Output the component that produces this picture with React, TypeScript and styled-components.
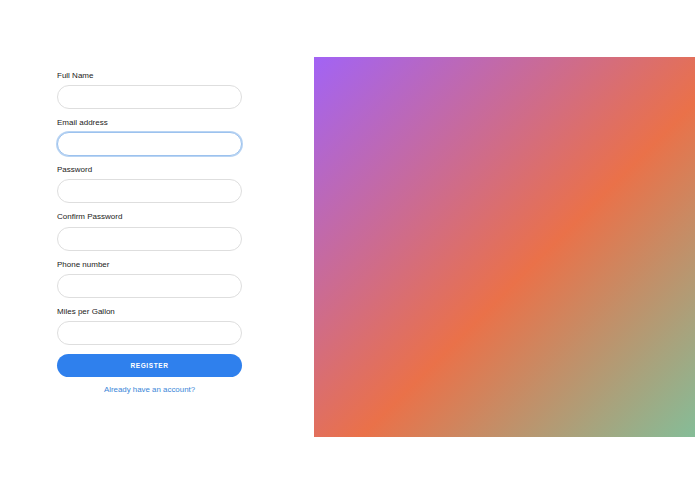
import React from "react";
import styled, { createGlobalStyle } from "styled-components";

const Global = createGlobalStyle`
  html, body { margin: 0; padding: 0; background: #ffffff; }
  body { font-family: "Liberation Sans", Arial, sans-serif; overflow: hidden; }
  * { box-sizing: border-box; }
`;

const Page = styled.div`
  display: flex;
  align-items: flex-start;
  width: 695px;
  height: 494px;
  padding: 57px 0 0 57px;
  gap: 72px;
`;

const Form = styled.form`
  width: 185px;
  display: flex;
  flex-direction: column;
  padding-top: 13.8px;
`;

const Field = styled.div`
  display: flex;
  flex-direction: column;
  margin-bottom: 8.9px;
`;

const Label = styled.label`
  font-size: 8px;
  line-height: 10px;
  color: #222222;
  margin-bottom: 4.3px;
`;

const Input = styled.input<{ $focused?: boolean }>`
  height: 24px;
  width: 100%;
  border-radius: 12px;
  border: 1px solid ${(p) => (p.$focused ? "#9cc2ee" : "#dedede")};
  box-shadow: ${(p) => (p.$focused ? "0 0 0 1px #b9d4f3" : "none")};
  background: #fff;
  outline: none;
  padding: 0 10px;
  font-family: inherit;
  font-size: 8px;
`;

const Button = styled.button`
  height: 23px;
  width: 100%;
  border: none;
  border-radius: 12px;
  background: #2f80ed;
  color: #fff;
  font-family: inherit;
  font-weight: 700;
  font-size: 6.5px;
  letter-spacing: 0.6px;
  margin-top: -0.3px;
`;

const LinkText = styled.a`
  display: block;
  text-align: center;
  margin-top: 8.5px;
  font-size: 7.9px;
  line-height: 10px;
  color: #3a86d8;
  text-decoration: none;
`;

const Gradient = styled.div`
  flex: 1;
  height: 380px;
  background: linear-gradient(135deg, #a263f5 0%, #ea7149 56%, #85bd98 100%);
`;

const fields = [
  { label: "Full Name", type: "text" },
  { label: "Email address", type: "email", focused: true },
  { label: "Password", type: "password" },
  { label: "Confirm Password", type: "password" },
  { label: "Phone number", type: "tel" },
  { label: "Miles per Gallon", type: "text" },
];

export default function App() {
  return (
    <>
      <Global />
      <Page>
        <Form onSubmit={(e) => e.preventDefault()}>
          {fields.map((f) => (
            <Field key={f.label}>
              <Label>{f.label}</Label>
              <Input type={f.type} $focused={f.focused} />
            </Field>
          ))}
          <Button type="submit">REGISTER</Button>
          <LinkText href="#">Already have an account?</LinkText>
        </Form>
        <Gradient />
      </Page>
    </>
  );
}
